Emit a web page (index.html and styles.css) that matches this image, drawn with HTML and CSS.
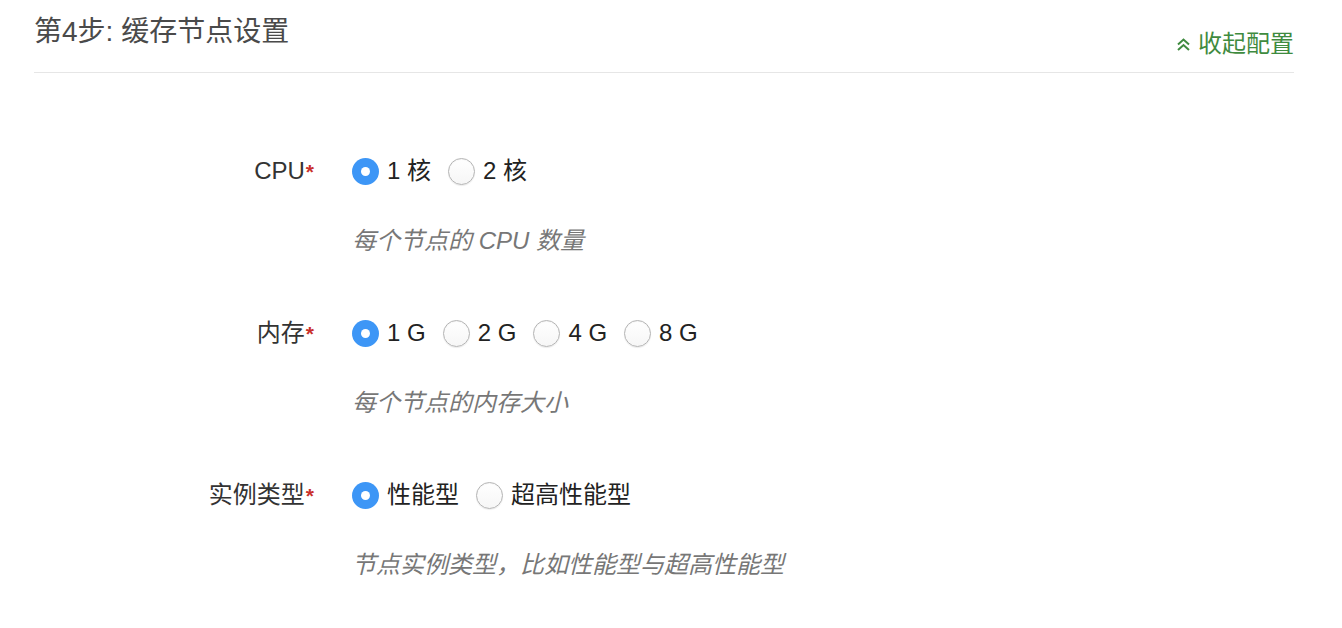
FILE: index.html
```html
<!DOCTYPE html>
<html lang="zh">
<head>
<meta charset="utf-8">
<title>缓存节点设置</title>
<link rel="stylesheet" href="styles.css">
</head>
<body>
<div class="panel">
  <div class="header">
    <h3 class="title">第4步: 缓存节点设置</h3>
    <a class="toggle" href="#">
      <svg class="chev" width="15" height="15" viewBox="0 0 15 15" aria-hidden="true">
        <path d="M2 7.5 L7.5 2.5 L13 7.5 M2 13 L7.5 8 L13 13" fill="none" stroke="#3f8b3f" stroke-width="2"/>
      </svg>收起配置</a>
  </div>
  <form class="form">
    <div class="field">
      <label class="label">CPU<span class="req">*</span></label>
      <div class="options">
        <label class="opt"><input type="radio" name="cpu" checked><span>1 核</span></label>
        <label class="opt"><input type="radio" name="cpu"><span>2 核</span></label>
      </div>
      <p class="help">每个节点的 CPU 数量</p>
    </div>
    <div class="field">
      <label class="label">内存<span class="req">*</span></label>
      <div class="options">
        <label class="opt"><input type="radio" name="mem" checked><span>1 G</span></label>
        <label class="opt"><input type="radio" name="mem"><span>2 G</span></label>
        <label class="opt"><input type="radio" name="mem"><span>4 G</span></label>
        <label class="opt"><input type="radio" name="mem"><span>8 G</span></label>
      </div>
      <p class="help">每个节点的内存大小</p>
    </div>
    <div class="field">
      <label class="label">实例类型<span class="req">*</span></label>
      <div class="options">
        <label class="opt"><input type="radio" name="type" checked><span>性能型</span></label>
        <label class="opt"><input type="radio" name="type"><span>超高性能型</span></label>
      </div>
      <p class="help">节点实例类型，比如性能型与超高性能型</p>
    </div>
  </form>
</div>
</body>
</html>
```

FILE: styles.css
```css
* { box-sizing: border-box; }
html, body {
  margin: 0;
  padding: 0;
  background: #fff;
}
body {
  font-family: "Liberation Sans", Arial, "Noto Sans CJK SC", sans-serif;
  color: #333;
}
.panel {
  margin-left: 34px;
  width: 1260px;
}
.header {
  display: flex;
  justify-content: space-between;
  align-items: flex-start;
  padding-top: 12px;
  padding-bottom: 11px;
  border-bottom: 1px solid #e6e6e6;
}
.title {
  margin: 0;
  font-size: 28px;
  line-height: 40px;
  font-weight: normal;
  color: #4a4a4a;
}
.toggle {
  margin-top: 15px;
  font-size: 24px;
  line-height: 34px;
  color: #3f8b3f;
  text-decoration: none;
  display: flex;
  align-items: center;
}
.chev {
  margin-right: 7px;
  margin-top: 1px;
}
.form {
  margin: 0;
  padding-top: 81px;
}
.field {
  display: grid;
  grid-template-columns: 280px 1fr;
  column-gap: 38px;
  margin-bottom: 58px;
}
.label {
  grid-column: 1;
  display: block;
  height: 34px;
  text-align: right;
  font-size: 24px;
  line-height: 34px;
  color: #333;
}
.req {
  color: #c9302c;
  font-size: 21px;
  font-weight: bold;
  line-height: 1;
  margin-left: 1px;
}
.options {
  grid-column: 2;
  display: flex;
  align-items: center;
  gap: 17px;
  height: 34px;
}
.opt {
  display: flex;
  align-items: center;
  gap: 8px;
  font-size: 24px;
  line-height: 34px;
  color: #222;
}
.opt input {
  -webkit-appearance: none;
  appearance: none;
  margin: 0;
  width: 27px;
  height: 27px;
  border-radius: 50%;
  border: 1px solid #b4b4b4;
  background: linear-gradient(#ffffff, #f6f6f6);
  box-shadow: inset 0 1px 1px rgba(0,0,0,0.04), 0 1px 1px rgba(0,0,0,0.08);
  position: relative;
}
.opt input:checked {
  border: none;
  background: #3d96f6;
  box-shadow: none;
}
.opt input:checked::after {
  content: "";
  position: absolute;
  left: 50%;
  top: 50%;
  width: 9px;
  height: 9px;
  margin: -4.5px 0 0 -4.5px;
  border-radius: 50%;
  background: #fff;
}
.help {
  grid-column: 2;
  margin: 36px 0 0;
  font-size: 24px;
  line-height: 34px;
  font-style: italic;
  color: #777;
}
```
